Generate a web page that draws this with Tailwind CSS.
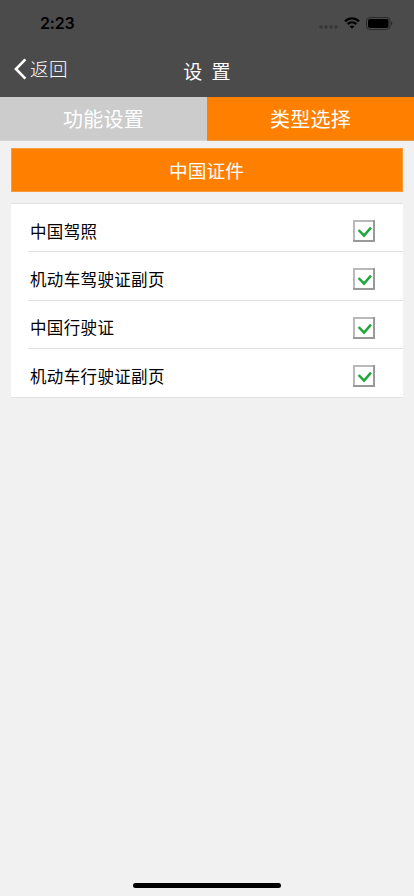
<!DOCTYPE html>
<html lang="zh-CN">
<head>
  <meta charset="UTF-8" />
  <meta name="viewport" content="width=device-width, initial-scale=1.0"/>
  <title>设置</title>
  <script src="https://cdn.jsdelivr.net/npm/@tailwindcss/browser@4"></script>
</head>
<body class="bg-[#f1f1f1] h-screen flex flex-col overflow-hidden font-['Noto_Sans_CJK_SC',sans-serif]">

  <!-- Header -->
  <header class="bg-[#4b4b4c] h-[97px] shrink-0">
    <div class="h-[46px] flex items-center justify-between pl-10 pr-[21px]">
      <span class="font-[Inter,sans-serif] font-semibold text-[16px] leading-none tracking-[-0.2px] text-black">2:23</span>
      <div class="flex items-center">
        <svg class="w-[19px] h-[4px] mt-2 mr-[6px]" viewBox="0 0 19 4" fill="#373738">
          <circle cx="2" cy="2" r="1.8"/><circle cx="7" cy="2" r="1.8"/><circle cx="12" cy="2" r="1.8"/><circle cx="17" cy="2" r="1.8"/>
        </svg>
        <svg class="w-4 h-3 mr-[6px]" viewBox="0 0 16 12" fill="none" stroke="#000" stroke-width="2.3">
          <path d="M1 4.4C5 .4 11 .4 15 4.4"/>
          <path d="M3.6 7.2C6.2 4.7 9.8 4.7 12.4 7.2"/>
          <path d="M8 11.8L5.6 9.4C7 8.1 9 8.1 10.4 9.4Z" fill="#000" stroke="none"/>
        </svg>
        <svg class="w-[27px] h-[13px]" viewBox="0 0 27 13">
          <rect x=".5" y=".5" width="23.5" height="12" rx="3.2" fill="none" stroke="#2a2a2b"/>
          <rect x="2" y="2" width="20.5" height="9" rx="1.8" fill="#000"/>
          <path d="M25.2 4.5C26.6 5 26.6 8 25.2 8.5Z" fill="#222"/>
        </svg>
      </div>
    </div>
    <div class="h-[51px] grid grid-cols-[1fr_auto_1fr] text-white">
      <a href="#" class="flex items-center h-[46px] pl-[14px]">
        <svg class="w-[13px] h-[22px] mr-[3px]" viewBox="0 0 13 22" fill="none" stroke="#fff" stroke-width="2.6">
          <path d="M11.4 1.3L1.9 11L11.4 20.7"/>
        </svg>
        <span class="font-light text-[18.5px] leading-none tracking-[0.6px] pb-[1px]">返回</span>
      </a>
      <h1 class="h-[48px] flex items-center text-[19px] leading-none tracking-[0.3px] whitespace-pre">设  置</h1>
    </div>
  </header>

  <!-- Tabs -->
  <nav class="grid grid-cols-2 h-[44px] shrink-0 text-white text-[20px] tracking-[0.2px]">
    <button class="bg-[#cccccc] flex items-center justify-center leading-none border-b border-[#d5d5d5]">功能设置</button>
    <button class="bg-[#ff8000] flex items-center justify-center leading-none border-b border-[#e29a52]">类型选择</button>
  </nav>

  <main class="px-[11px] pt-[7px] grow">
    <h2 class="bg-[#ff8000] border border-[#ff9a38] text-white h-[44px] flex items-center justify-center text-[18.7px] leading-none tracking-[0.1px] pr-[1px]">中国证件</h2>

    <!-- Document types -->
    <ul id="typeList" class="mt-[11px] h-[195px] bg-white border-y border-[#e2e2e2] grid grid-rows-4"></ul>
  </main>

  <!-- Home indicator -->
  <div class="w-[148px] h-[5px] rounded-full bg-black mx-auto mb-[8.5px]"></div>

  <script>
    const types = ['中国驾照', '机动车驾驶证副页', '中国行驶证', '机动车行驶证副页'];
    const typeList = document.getElementById('typeList');

    types.forEach((name) => {
      const row = document.createElement('li');
      row.className = "group pl-[17px]";
      row.innerHTML = `
        <div class="h-full flex items-center justify-between pl-[2px] pr-[28px] pt-[7px] border-b border-[#e2e2e2] group-last:border-0">
          <span class="text-[16.5px] leading-none tracking-[0.35px] text-black">${name}</span>
          <svg class="w-[22px] h-[22px]" viewBox="0 0 22 22" fill="none">
            <path d="M1 21V1H21" stroke="#b9b9b9" stroke-width="2"/>
            <path d="M21 0V21H0" stroke="#999" stroke-width="2"/>
            <path d="M5.6 10L11 15.6L18 7.6" stroke="#1fa83a" stroke-width="2.5"/>
          </svg>
        </div>
      `;
      typeList.appendChild(row);
    });
  </script>

</body>
</html>
